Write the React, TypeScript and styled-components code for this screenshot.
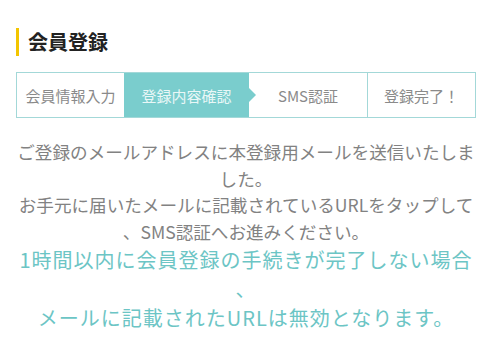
import styled, { createGlobalStyle } from 'styled-components';

const GlobalStyle = createGlobalStyle`
  html, body {
    margin: 0;
    padding: 0;
    background: #ffffff;
  }
  body {
    font-family: 'Noto Sans CJK JP', 'Noto Sans', sans-serif;
  }
`;

const Page = styled.div`
  display: flex;
  flex-direction: column;
  width: 460px;
  padding: 28px 24px 0 16px;
`;

const Title = styled.h1`
  margin: 0;
  height: 28px;
  padding-left: 9px;
  border-left: 3px solid #f3c500;
  font-size: 20px;
  line-height: 28px;
  font-weight: 700;
  color: #222222;
`;

const Steps = styled.div`
  display: flex;
  margin-top: 16px;
  height: 44px;
  border: 1px solid #a3d8d8;
`;

const Step = styled.div<{ $width: number; $active?: boolean }>`
  position: relative;
  display: flex;
  align-items: center;
  justify-content: center;
  box-sizing: border-box;
  width: ${(p) => p.$width}px;
  border-left: ${(p) => (p.$active ? 'none' : '1px solid #a3d8d8')};
  background: ${(p) => (p.$active ? '#7acdcd' : '#ffffff')};
  color: ${(p) => (p.$active ? '#e9f7f7' : '#8a8a8a')};
  font-size: 15px;

  &:first-child {
    border-left: none;
  }

  ${(p) =>
    p.$active &&
    `
    &::after {
      content: '';
      position: absolute;
      right: -7px;
      top: 50%;
      margin-top: -7px;
      border-top: 7px solid transparent;
      border-bottom: 7px solid transparent;
      border-left: 7px solid #7acdcd;
      z-index: 1;
    }
    & + div {
      border-left: none;
    }
  `}
`;

const Message = styled.p`
  margin: 21px 0 0;
  text-align: center;
  font-size: 17.6px;
  line-height: 26.5px;
  color: #828282;
`;

const Notice = styled.p`
  margin: 0;
  text-align: center;
  font-size: 20px;
  letter-spacing: 1px;
  line-height: 29px;
  color: #6cc5c5;
`;

const steps = [
  { label: '会員情報入力', width: 107 },
  { label: '登録内容確認', width: 125, active: true },
  { label: 'SMS認証', width: 118 },
  { label: '登録完了！', width: 108 },
];

export default function App() {
  return (
    <>
      <GlobalStyle />
      <Page>
        <Title>会員登録</Title>
        <Steps>
          {steps.map((s) => (
            <Step key={s.label} $width={s.width} $active={s.active}>
              {s.label}
            </Step>
          ))}
        </Steps>
        <Message>
          ご登録のメールアドレスに本登録用メールを送信いたしま
          <br />
          した。
          <br />
          お手元に届いたメールに記載されているURLをタップして
          <br />
          、SMS認証へお進みください。
        </Message>
        <Notice>
          1時間以内に会員登録の手続きが完了しない場合
          <br />
          、
          <br />
          メールに記載されたURLは無効となります。
        </Notice>
      </Page>
    </>
  );
}
